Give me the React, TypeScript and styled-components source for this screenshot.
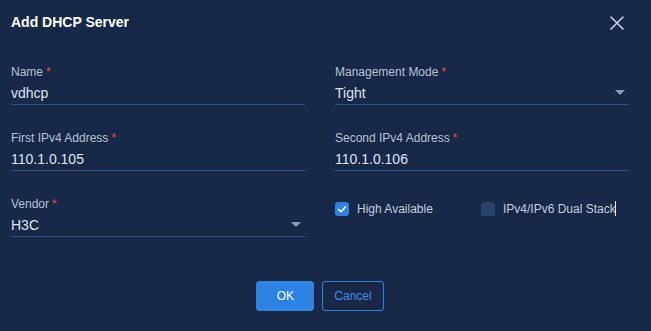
import React from "react";
import styled, { createGlobalStyle } from "styled-components";

const Global = createGlobalStyle`
  html, body { margin: 0; padding: 0; background: #172946; }
  body { font-family: "Liberation Sans", Arial, sans-serif; }
  * { box-sizing: border-box; }
`;

const Dialog = styled.div`
  width: 651px;
  height: 331px;
  background: #172946;
  display: flex;
  flex-direction: column;
  padding: 0 22px 0 11px;
`;

const Header = styled.div`
  display: flex;
  align-items: center;
  justify-content: space-between;
  padding-top: 12px;
  height: 32px;
`;

const Title = styled.h1`
  margin: 0;
  font-size: 14px;
  line-height: 20px;
  font-weight: 700;
  color: #ffffff;
`;

const Close = styled.button`
  width: 16px;
  height: 16px;
  padding: 0;
  margin-right: 4px;
  margin-top: 1px;
  border: none;
  background: transparent;
  display: flex;
  align-items: center;
  justify-content: center;
  cursor: pointer;
`;

const Form = styled.div`
  margin-top: 32px;
  display: grid;
  grid-template-columns: 294px 294px;
  column-gap: 30px;
  row-gap: 25px;
`;

const Field = styled.div`
  display: flex;
  flex-direction: column;
`;

const Label = styled.label`
  font-size: 12px;
  line-height: 16px;
  color: #b5c1d2;
`;

const Req = styled.span`
  color: #f0434a;
  margin-left: 3px;
`;

const Input = styled.div`
  height: 25px;
  padding-top: 1px;
  font-size: 14px;
  line-height: 24px;
  color: #dde4ee;
  border-bottom: 1px solid #2d5488;
  display: flex;
  align-items: center;
  justify-content: space-between;
`;

const Caret = styled.span`
  width: 0;
  height: 0;
  border-left: 5px solid transparent;
  border-right: 5px solid transparent;
  border-top: 5px solid #8c9cb6;
  margin-right: 4px;
`;

const CheckRow = styled.div`
  display: flex;
  align-items: center;
  padding-top: 5px;
  height: 21px;
`;

const CheckItem = styled.label<{ $w?: number }>`
  display: flex;
  align-items: center;
  gap: 8px;
  width: ${(p) => (p.$w ? `${p.$w}px` : "auto")};
  font-size: 12px;
  line-height: 16px;
  color: #c3cddb;
`;

const Box = styled.span<{ $on?: boolean }>`
  width: 14px;
  height: 14px;
  border-radius: 3px;
  background: ${(p) => (p.$on ? "#2b82e2" : "#28426a")};
  display: flex;
  align-items: center;
  justify-content: center;
`;

const Cursor = styled.span`
  display: inline-block;
  width: 1px;
  height: 15px;
  background: #e6ebf2;
  margin-left: -1px;
  vertical-align: -3px;
`;

const Footer = styled.div`
  margin-top: 44px;
  display: flex;
  justify-content: center;
  gap: 8px;
`;

const Button = styled.button<{ $primary?: boolean }>`
  height: 30px;
  min-width: 58px;
  padding: 0 11px;
  border-radius: 3px;
  font-family: "Liberation Sans", Arial, sans-serif;
  font-size: 12px;
  border: 1px solid #2b82e2;
  background: ${(p) => (p.$primary ? "#2b82e2" : "transparent")};
  color: ${(p) => (p.$primary ? "#ffffff" : "#3a8ee8")};
  cursor: pointer;
`;

function TextField({ label, value, select }: { label: string; value: string; select?: boolean }) {
  return (
    <Field>
      <Label>
        {label}
        <Req>*</Req>
      </Label>
      <Input>
        <span>{value}</span>
        {select && <Caret />}
      </Input>
    </Field>
  );
}

export default function App() {
  return (
    <>
      <Global />
      <Dialog>
        <Header>
          <Title>Add DHCP Server</Title>
          <Close aria-label="close">
            <svg width="14" height="14" viewBox="0 0 14 14">
              <path d="M1 1 L13 13 M13 1 L1 13" stroke="#c9d2de" strokeWidth="1.6" strokeLinecap="round" />
            </svg>
          </Close>
        </Header>
        <Form>
          <TextField label="Name" value="vdhcp" />
          <TextField label="Management Mode" value="Tight" select />
          <TextField label="First IPv4 Address" value="110.1.0.105" />
          <TextField label="Second IPv4 Address" value="110.1.0.106" />
          <TextField label="Vendor" value="H3C" select />
          <CheckRow>
            <CheckItem $w={146}>
              <Box $on>
                <svg width="10" height="8" viewBox="0 0 10 8">
                  <path d="M1 4 L4 6.8 L9 1.2" fill="none" stroke="#ffffff" strokeWidth="1.5" />
                </svg>
              </Box>
              High Available
            </CheckItem>
            <CheckItem>
              <Box />
              <span>
                IPv4/IPv6 Dual Stack
                <Cursor />
              </span>
            </CheckItem>
          </CheckRow>
        </Form>
        <Footer>
          <Button $primary>OK</Button>
          <Button>Cancel</Button>
        </Footer>
      </Dialog>
    </>
  );
}
